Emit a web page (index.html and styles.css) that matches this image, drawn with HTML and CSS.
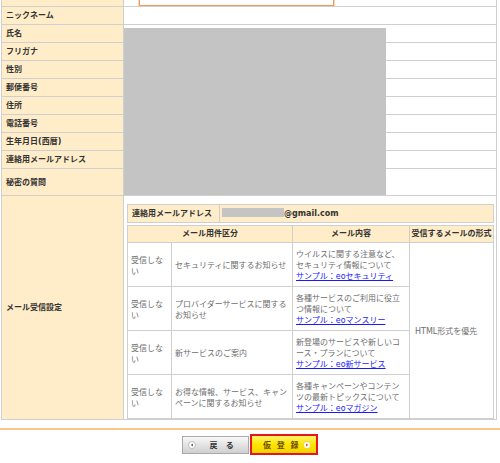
FILE: index.html
```html
<!DOCTYPE html>
<html lang="ja">
<head>
<meta charset="utf-8">
<title>登録内容</title>
<link rel="stylesheet" href="styles.css">
</head>
<body>
<div class="form-wrap">
  <table class="form">
    <colgroup><col class="c-label"><col class="c-value"></colgroup>
    <tr class="r-top"><th></th><td class="top-cell"><div class="input-box"></div></td></tr>
    <tr><th>ニックネーム</th><td></td></tr>
    <tr><th>氏名</th><td></td></tr>
    <tr><th>フリガナ</th><td></td></tr>
    <tr><th>性別</th><td></td></tr>
    <tr><th>郵便番号</th><td></td></tr>
    <tr><th>住所</th><td></td></tr>
    <tr><th>電話番号</th><td></td></tr>
    <tr><th>生年月日(西暦)</th><td></td></tr>
    <tr><th>連絡用メールアドレス</th><td></td></tr>
    <tr class="r-secret"><th>秘密の質問</th><td></td></tr>
    <tr class="r-mail">
      <th>メール受信設定</th>
      <td class="mail-cell">
        <table class="addr">
          <tr>
            <td class="addr-label">連絡用メールアドレス</td>
            <td class="addr-value"><span class="addr-mask"></span>@gmail.com</td>
          </tr>
        </table>
        <table class="list">
          <colgroup><col class="l1"><col class="l2"><col class="l3"><col class="l4"></colgroup>
          <tr>
            <th colspan="2">メール用件区分</th>
            <th>メール内容</th>
            <th>受信するメールの形式</th>
          </tr>
          <tr>
            <td>受信しない</td>
            <td>セキュリティに関するお知らせ</td>
            <td>ウイルスに関する注意など、セキュリティ情報について<br><a href="#">サンプル：eoセキュリティ</a></td>
            <td class="format" rowspan="4">HTML形式を優先</td>
          </tr>
          <tr>
            <td>受信しない</td>
            <td>プロバイダーサービスに関するお知らせ</td>
            <td>各種サービスのご利用に役立つ情報について<br><a href="#">サンプル：eoマンスリー</a></td>
          </tr>
          <tr>
            <td>受信しない</td>
            <td>新サービスのご案内</td>
            <td>新登場のサービスや新しいコース・プランについて<br><a href="#">サンプル：eo新サービス</a></td>
          </tr>
          <tr>
            <td>受信しない</td>
            <td>お得な情報、サービス、キャンペーンに関するお知らせ</td>
            <td>各種キャンペーンやコンテンツの最新トピックスについて<br><a href="#">サンプル：eoマガジン</a></td>
          </tr>
        </table>
      </td>
    </tr>
  </table>
  <div class="redact"></div>
</div>
<div class="footer">
  <div class="buttons">
    <a class="btn btn-back" href="#">
      <svg class="ico" width="8" height="8" viewBox="0 0 8 8"><circle cx="4" cy="4" r="3.5" fill="#fff" stroke="#a8a8a8" stroke-width="0.7"/><path d="M5 2.4 L2.6 4 L5 5.6 Z" fill="#666"/></svg>
      <span class="btn-text">戻 る</span>
    </a>
    <a class="btn btn-next" href="#">
      <span class="btn-text">仮 登 録</span>
      <svg class="ico" width="8" height="8" viewBox="0 0 8 8"><circle cx="4" cy="4" r="3.6" fill="#fff" stroke="#e0c000" stroke-width="0.5"/><path d="M3 2.4 L5.4 4 L3 5.6 Z" fill="#f05a1e"/></svg>
    </a>
  </div>
</div>
</body>
</html>
```
FILE: styles.css
```css
* { box-sizing: border-box; }
html, body {
  margin: 0;
  padding: 0;
  background: #fff;
}
body {
  width: 500px;
  height: 463px;
  overflow: hidden;
  font-family: "DejaVu Sans", "Noto Sans CJK JP", sans-serif;
  font-size: 8px;
  color: #666;
}

.form-wrap {
  position: relative;
  margin-top: -9px;
}

.form {
  border-collapse: collapse;
  table-layout: fixed;
  width: 496px;
  margin-left: 1px;
}
.c-label { width: 122px; }

.form > tbody > tr > th,
.form > tbody > tr > td {
  border: 1px solid #cfcfcf;
  padding: 0;
  line-height: 17px;
}
.form > tbody > tr > th {
  background: #ffedc9;
  text-align: left;
  font-weight: bold;
  color: #333;
  padding: 1px 0 0 4px;
  line-height: 16px;
  vertical-align: middle;
}
.form > tbody > tr > td { background: #fff; }

.top-cell { vertical-align: top; }
.input-box {
  width: 195px;
  height: 14px;
  margin-left: 15px;
  border: 1px solid #f09a5a;
  box-shadow: 0 0 0 1px #fcd6b4;
}

.r-secret > th, .r-secret > td { height: 27px; }

.form > tbody > tr.r-mail > td.mail-cell {
  padding: 8px 2px 0 3px;
  vertical-align: top;
  line-height: normal;
}

/* address line */
.addr {
  width: 100%;
  border-collapse: collapse;
  background: #ffedc9;
}
.addr td {
  border: 1px solid #cfcfcf;
  line-height: 17px;
  padding: 0;
  font-weight: bold;
  color: #333;
  white-space: nowrap;
}
.addr-label {
  width: 92px;
  padding-left: 4px !important;
}
.addr-value { padding-left: 1px !important; }
.addr-mask {
  display: inline-block;
  width: 62px;
  height: 9px;
  margin-left: 1px;
  background: #c4c4c4;
  vertical-align: -1px;
}

/* mail list */
.list {
  width: 100%;
  margin-top: 2px;
  border-collapse: collapse;
  table-layout: fixed;
}
.l1 { width: 44px; }
.l2 { width: 121px; }
.l3 { width: 117px; }
.list th {
  background: #ffedc9;
  border: 1px solid #cfcfcf;
  line-height: 16px;
  padding: 0;
  font-weight: bold;
  color: #333;
  text-align: center;
  white-space: nowrap;
}
.list td {
  border: 1px solid #cfcfcf;
  line-height: 11px;
  padding: 6px 3px 4px 3px;
  color: #6e6e6e;
  vertical-align: middle;
  line-break: loose;
}
.list td.format { padding-left: 5px; }
.list a {
  color: #1a1aff;
  text-decoration: underline;
}

.redact {
  position: absolute;
  left: 124px;
  top: 37px;
  width: 262px;
  height: 167px;
  background: #c4c4c4;
}

/* footer */
.footer {
  margin-top: 8px;
  border-top: 2px solid #fac68e;
  padding-top: 4px;
}
.buttons {
  display: flex;
  justify-content: center;
  align-items: center;
  gap: 1px;
}
.btn {
  display: flex;
  align-items: center;
  text-decoration: none;
  font-weight: bold;
  font-size: 8px;
  white-space: nowrap;
}
.btn .btn-text { flex: 1; text-align: center; }
.btn-back {
  width: 67px;
  height: 18px;
  padding-left: 5px;
  border: 1px solid #a9a9a9;
  background: linear-gradient(#f8f8f8, #cfcfcf);
  color: #333;
}
.btn-back .btn-text { letter-spacing: 2.7px; padding-left: 2px; }
.btn-next {
  width: 68px;
  height: 21px;
  padding-right: 5px;
  border: 2px solid #e8141c;
  background: linear-gradient(#fff56a, #ffe400 50%, #f2d400);
  color: #6b4a00;
}
.btn-next .btn-text { letter-spacing: 1.5px; padding-left: 8px; }
```
